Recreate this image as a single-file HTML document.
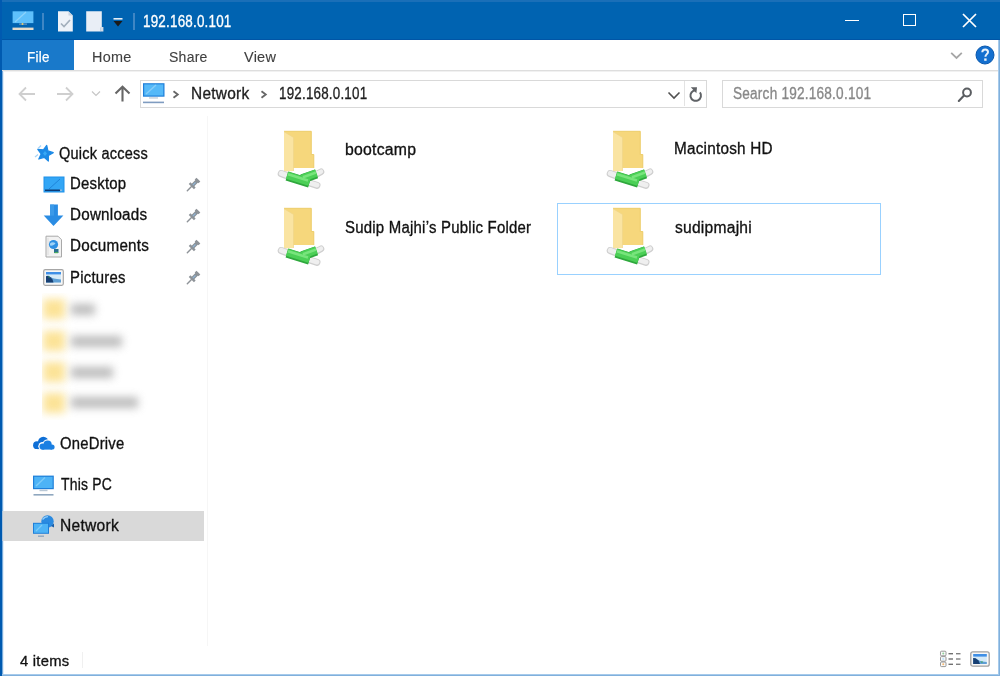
<!DOCTYPE html>
<html><head><meta charset="utf-8"><style>
html,body{margin:0;padding:0;width:1000px;height:676px;overflow:hidden;background:#fff;position:relative}
.t{position:absolute;font-family:"Liberation Sans", sans-serif;line-height:1;white-space:nowrap;-webkit-text-stroke:0.32px currentColor;transform-origin:0 0}
svg{overflow:visible}
</style></head><body><div id="w" style="position:absolute;left:0;top:0;width:1000px;height:676px;overflow:hidden;background:#fff">
<div style="position:absolute;left:0;top:0;width:1000px;height:40px;background:#0063B1"></div>
<div style="position:absolute;left:0;top:0;width:1000px;height:1.5px;background:#1a6fb8"></div>
<div style="position:absolute;left:0;top:38.5px;width:1000px;height:1.5px;background:#0055a6"></div>
<svg style="position:absolute;left:12px;top:10px" width="22" height="22" viewBox="0 0 22 22">
<rect x="0.6" y="1.3" width="20.8" height="11.8" fill="#5ec0fb"/><path d="M3 12L14 2" stroke="#8dd3fb" stroke-width="1.2"/>
<rect x="7" y="13.6" width="8" height="1" fill="#7aa3c8"/><circle cx="10.5" cy="14" r="1" fill="#e8d070"/>
<rect x="0.5" y="17.6" width="21" height="2.4" fill="#e6dccb"/></svg>
<div style="position:absolute;left:41.5px;top:12.5px;width:2px;height:17px;background:#4f8fc9;opacity:0.8"></div>
<svg style="position:absolute;left:57px;top:10px" width="18" height="23" viewBox="0 0 18 23">
<path d="M1 1.2H11.5L15.8 5.5V21.5H1Z" fill="#eef2f8"/><path d="M11.5 1.2V5.5H15.8" fill="#c6d2e0"/>
<path d="M4 13.5L7 16.5L13 10" stroke="#a3afbc" stroke-width="1.7" fill="none"/></svg>
<svg style="position:absolute;left:85px;top:10px" width="20" height="23" viewBox="0 0 20 23">
<path d="M1.2 1.2H16.8V17L15.5 18V21.5H1.2Z" fill="#e9eef6"/><rect x="15.2" y="17" width="3.2" height="4.5" fill="#d3dce8"/></svg>
<svg style="position:absolute;left:112px;top:17px" width="12" height="11" viewBox="0 0 12 11">
<rect x="1.5" y="1" width="9" height="1.6" fill="#e6eef6"/><path d="M1.5 4H10.5L6 9.5Z" fill="#1a1a1a"/></svg>
<div style="position:absolute;left:133px;top:12.5px;width:2px;height:17px;background:#4f8fc9;opacity:0.8"></div>
<div class="t" style="left:143.40px;top:13.56px;font-size:16px;color:#fff;letter-spacing:0.25px;transform:scaleX(0.8387);">192.168.0.101</div>
<div style="position:absolute;left:845px;top:19.8px;width:13.5px;height:1.7px;background:#fff"></div>
<div style="position:absolute;left:903.3px;top:13.8px;width:10.6px;height:10.6px;border:1.7px solid #fff"></div>
<svg style="position:absolute;left:962px;top:13px" width="15" height="15" viewBox="0 0 15 15">
<path d="M1 1L14 14M14 1L1 14" stroke="#fff" stroke-width="1.7"/></svg>
<div style="position:absolute;left:0;top:40px;width:1000px;height:30px;background:#fff"></div>
<div style="position:absolute;left:2px;top:40px;width:72px;height:30px;background:#1979CA"></div>
<div style="position:absolute;left:0;top:70px;width:1000px;height:1px;background:#dedede"></div>
<div style="position:absolute;left:0;top:71px;width:1000px;height:1px;background:#f1f1f1"></div>
<div class="t" style="left:27.00px;top:49.65px;font-size:14px;color:#fff;letter-spacing:0.25px;transform:scaleX(0.9583);-webkit-text-stroke:0.25px currentColor">File</div>
<div class="t" style="left:92.20px;top:49.65px;font-size:14px;color:#404040;letter-spacing:0.25px;transform:scaleX(1.0279);-webkit-text-stroke:0.12px currentColor">Home</div>
<div class="t" style="left:168.60px;top:49.65px;font-size:14px;color:#404040;letter-spacing:0.25px;transform:scaleX(1.0007);-webkit-text-stroke:0.12px currentColor">Share</div>
<div class="t" style="left:244.20px;top:49.65px;font-size:14px;color:#404040;letter-spacing:0.25px;transform:scaleX(1.0334);-webkit-text-stroke:0.12px currentColor">View</div>
<svg style="position:absolute;left:950px;top:51px" width="13" height="9" viewBox="0 0 13 9">
<path d="M1.2 1.8L6.5 7L11.8 1.8" stroke="#a6a6a6" stroke-width="1.8" fill="none"/></svg>
<svg style="position:absolute;left:975px;top:45px" width="20" height="20" viewBox="0 0 20 20">
<circle cx="10" cy="10" r="9" fill="#136fcf" stroke="#0b58ad" stroke-width="1"/>
<path d="M7.3 7.3C7.3 5.4 8.6 4.4 10.2 4.4C11.9 4.4 13 5.5 13 6.9C13 9 10.4 9.4 10.4 11.8" stroke="#e8f2fb" stroke-width="2" fill="none"/>
<rect x="9.2" y="13.4" width="2.4" height="2.4" fill="#e8f2fb"/></svg>
<svg style="position:absolute;left:18px;top:86px" width="18" height="16" viewBox="0 0 18 16">
<path d="M17 8H2.5M8 1.5L1.5 8L8 14.5" stroke="#cfcfcf" stroke-width="1.8" fill="none"/></svg>
<svg style="position:absolute;left:56px;top:86px" width="18" height="16" viewBox="0 0 18 16">
<path d="M1 8H15.5M10 1.5L16.5 8L10 14.5" stroke="#cfcfcf" stroke-width="1.8" fill="none"/></svg>
<svg style="position:absolute;left:91px;top:90px" width="10" height="7" viewBox="0 0 10 7">
<path d="M1 1.5L5 5.5L9 1.5" stroke="#c6c6c6" stroke-width="1.2" fill="none"/></svg>
<svg style="position:absolute;left:114px;top:85px" width="17" height="17" viewBox="0 0 17 17">
<path d="M8.5 16.5V2M1.5 8.5L8.5 1.8L15.5 8.5" stroke="#666" stroke-width="2.1" fill="none"/></svg>
<div style="position:absolute;left:140px;top:80px;width:564.5px;height:26px;border:1px solid #d9d9d9"></div>
<div style="position:absolute;left:684px;top:81px;width:1px;height:25px;background:#e3e3e3"></div>
<svg style="position:absolute;left:142px;top:82px" width="24" height="22" viewBox="0 0 24 22">
<rect x="1" y="1.2" width="21.5" height="13.5" fill="#1f7fd9"/><rect x="2.2" y="2.4" width="19.1" height="11.1" fill="#55b9f8"/>
<path d="M4 12L14 3" stroke="#85cdf9" stroke-width="1.5"/>
<rect x="7" y="15.2" width="9" height="1.5" fill="#c9d3dd"/><rect x="1" y="19.6" width="21" height="1.6" fill="#7f9cc0"/></svg>
<svg style="position:absolute;left:172px;top:90px" width="8" height="9" viewBox="0 0 8 9">
<path d="M1.5 1.2L5.8 4.5L1.5 7.8" stroke="#666" stroke-width="1.8" fill="none"/></svg>
<div class="t" style="left:191.00px;top:85.96px;font-size:16px;color:#1e1e1e;letter-spacing:0.25px;transform:scaleX(0.9661);">Network</div>
<svg style="position:absolute;left:260px;top:90px" width="8" height="9" viewBox="0 0 8 9">
<path d="M1.5 1.2L5.8 4.5L1.5 7.8" stroke="#666" stroke-width="1.8" fill="none"/></svg>
<div class="t" style="left:279.00px;top:85.96px;font-size:16px;color:#1e1e1e;letter-spacing:0.25px;transform:scaleX(0.8365);">192.168.0.101</div>
<svg style="position:absolute;left:667px;top:91px" width="14" height="9" viewBox="0 0 14 9">
<path d="M1.5 1.5L7 7L12.5 1.5" stroke="#505050" stroke-width="1.6" fill="none"/></svg>
<svg style="position:absolute;left:688px;top:86px" width="16" height="17" viewBox="0 0 16 17">
<path d="M11.93 6.31A5.3 5.3 0 1 1 7.6 4.22" stroke="#5f6266" stroke-width="2" fill="none"/>
<path d="M2.8 1.2L9 1.2L8.4 7.2Z" fill="#5f6266"/></svg>
<div style="position:absolute;left:722px;top:80px;width:259px;height:26px;border:1px solid #d9d9d9"></div>
<div class="t" style="left:733.00px;top:85.96px;font-size:16px;color:#888;letter-spacing:0.25px;transform:scaleX(0.8510);">Search 192.168.0.101</div>
<svg style="position:absolute;left:956px;top:87px" width="17" height="16" viewBox="0 0 17 16">
<circle cx="11" cy="5.5" r="3.9" stroke="#5a5d61" stroke-width="2" fill="none"/>
<path d="M8 8.6L2.8 13.9" stroke="#5a5d61" stroke-width="2.1" stroke-linecap="round" fill="none"/></svg>
<div style="position:absolute;left:207px;top:116px;width:1px;height:530px;background:#f6f6f6"></div>
<div style="position:absolute;left:2px;top:511px;width:202px;height:30px;background:#d9d9d9"></div>
<div class="t" style="left:59.00px;top:146.06px;font-size:16px;color:#111;letter-spacing:0.25px;transform:scaleX(0.9076);">Quick access</div>
<div class="t" style="left:70.20px;top:176.46px;font-size:16px;color:#111;letter-spacing:0.25px;transform:scaleX(0.9326);">Desktop</div>
<div class="t" style="left:70.20px;top:207.46px;font-size:16px;color:#111;letter-spacing:0.25px;transform:scaleX(0.9500);">Downloads</div>
<div class="t" style="left:70.20px;top:238.46px;font-size:16px;color:#111;letter-spacing:0.25px;transform:scaleX(0.9514);">Documents</div>
<div class="t" style="left:70.20px;top:269.56px;font-size:16px;color:#111;letter-spacing:0.25px;transform:scaleX(0.9310);">Pictures</div>
<div class="t" style="left:60.00px;top:436.06px;font-size:16px;color:#111;letter-spacing:0.25px;transform:scaleX(0.9265);">OneDrive</div>
<div class="t" style="left:61.00px;top:477.26px;font-size:16px;color:#111;letter-spacing:0.25px;transform:scaleX(0.8712);">This PC</div>
<div class="t" style="left:60.00px;top:518.26px;font-size:16px;color:#111;letter-spacing:0.25px;transform:scaleX(0.9750);">Network</div>
<svg style="position:absolute;left:34px;top:144px" width="22" height="19" viewBox="0 0 22 19">
<path d="M12.73 1.38L13.90 6.89L19.25 8.63L14.38 11.45L14.38 17.08L10.19 13.31L4.83 15.05L7.12 9.91L3.81 5.35L9.41 5.94Z" fill="#1d8ae6" stroke="#1d8ae6" stroke-width="1.2" stroke-linejoin="round"/>
<path d="M11 7L13 9.5L11 12L9 9.5Z" fill="#38a8f5"/>
<path d="M4 4.5L7 1.5M1 13L4 10.5" stroke="#a8d4f6" stroke-width="1.3"/></svg>
<svg style="position:absolute;left:43px;top:176px" width="22" height="17" viewBox="0 0 22 17">
<rect x="0.5" y="0.5" width="21" height="16" fill="#1e90e8"/><rect x="1.5" y="1.5" width="19" height="14" fill="#33a6f5"/>
<path d="M6 13L17 3" stroke="#1b7fd6" stroke-width="0.9"/><rect x="16" y="13.5" width="3" height="1.6" fill="#8fb8dc"/><rect x="2" y="13.5" width="15" height="1.6" fill="#0b3a75"/></svg>
<svg style="position:absolute;left:43px;top:204px" width="21" height="23" viewBox="0 0 21 23">
<path d="M7.1 0.6H14.9V11.6H20.4L10.5 22.1L0.7 11.6H7.1Z" fill="#2a8ce3"/><path d="M7.1 0.6H11V11.6H7.1Z" fill="#3c9ae8"/></svg>
<svg style="position:absolute;left:45px;top:235px" width="18" height="23" viewBox="0 0 18 23">
<path d="M1 1.2H13L16.5 4.7V22H1Z" fill="#f2f2f2" stroke="#a9a9a9" stroke-width="1"/>
<path d="M3 3V20" stroke="#dcdcdc" stroke-width="1"/>
<circle cx="8.5" cy="9.5" r="4.6" fill="#2f90e2"/><path d="M5 8.5C6.5 7 9 6.8 10.5 8.5C9.5 10 7 11 5 10.5" fill="#9fd3f7"/>
<rect x="9" y="14" width="4.5" height="4" fill="#2b6f8f"/><rect x="9.5" y="17" width="3.5" height="1.2" fill="#4cae5a"/></svg>
<svg style="position:absolute;left:43px;top:269px" width="21" height="17" viewBox="0 0 21 17">
<rect x="0.7" y="0.7" width="19.6" height="15.6" rx="1.5" fill="#f6f6f6" stroke="#a6a6a6" stroke-width="1.2"/>
<rect x="3" y="3" width="15" height="10.5" fill="#d6eaf8"/><rect x="3" y="3" width="15" height="2.4" fill="#3f8fe6"/>
<path d="M3 7.5L5.5 6.8L8 8.5L11 9.5L14 10L18 10.5V13.5H3Z" fill="#5f9fd4"/>
<path d="M3 7.2L5 6.7L7.5 8.3L9.5 10.5L10.5 13.5H3Z" fill="#173f73"/><path d="M5 7L7 8L6 9Z" fill="#3a9a4a"/></svg>
<svg style="position:absolute;left:186px;top:177px" width="15" height="15" viewBox="0 0 15 15">
<path d="M1.3 13.8L5.5 9.5" stroke="#8e9398" stroke-width="1.4" stroke-linecap="round"/>
<path d="M3.6 6.2L8.8 11.4" stroke="#8e9398" stroke-width="2.4"/>
<path d="M6.5 8.5L11.2 3.8" stroke="#8a9196" stroke-width="3.6"/>
<path d="M9.6 1.6L13.4 5.4" stroke="#8e9398" stroke-width="2.6"/>
<path d="M6.8 8.2L9.5 5.5" stroke="#8fb3d6" stroke-width="1.2"/></svg>
<svg style="position:absolute;left:186px;top:208px" width="15" height="15" viewBox="0 0 15 15">
<path d="M1.3 13.8L5.5 9.5" stroke="#8e9398" stroke-width="1.4" stroke-linecap="round"/>
<path d="M3.6 6.2L8.8 11.4" stroke="#8e9398" stroke-width="2.4"/>
<path d="M6.5 8.5L11.2 3.8" stroke="#8a9196" stroke-width="3.6"/>
<path d="M9.6 1.6L13.4 5.4" stroke="#8e9398" stroke-width="2.6"/>
<path d="M6.8 8.2L9.5 5.5" stroke="#8fb3d6" stroke-width="1.2"/></svg>
<svg style="position:absolute;left:186px;top:239px" width="15" height="15" viewBox="0 0 15 15">
<path d="M1.3 13.8L5.5 9.5" stroke="#8e9398" stroke-width="1.4" stroke-linecap="round"/>
<path d="M3.6 6.2L8.8 11.4" stroke="#8e9398" stroke-width="2.4"/>
<path d="M6.5 8.5L11.2 3.8" stroke="#8a9196" stroke-width="3.6"/>
<path d="M9.6 1.6L13.4 5.4" stroke="#8e9398" stroke-width="2.6"/>
<path d="M6.8 8.2L9.5 5.5" stroke="#8fb3d6" stroke-width="1.2"/></svg>
<svg style="position:absolute;left:186px;top:270px" width="15" height="15" viewBox="0 0 15 15">
<path d="M1.3 13.8L5.5 9.5" stroke="#8e9398" stroke-width="1.4" stroke-linecap="round"/>
<path d="M3.6 6.2L8.8 11.4" stroke="#8e9398" stroke-width="2.4"/>
<path d="M6.5 8.5L11.2 3.8" stroke="#8a9196" stroke-width="3.6"/>
<path d="M9.6 1.6L13.4 5.4" stroke="#8e9398" stroke-width="2.6"/>
<path d="M6.8 8.2L9.5 5.5" stroke="#8fb3d6" stroke-width="1.2"/></svg>
<div style="position:absolute;left:42px;top:293px;width:110px;height:127px;overflow:hidden">
<div style="position:absolute;left:1px;top:6px;width:22px;height:20px;background:#fbd86c;filter:blur(4px);opacity:0.7"></div>
<div style="position:absolute;left:29px;top:10.5px;width:24px;height:11px;background:#a6a6a6;filter:blur(4px);opacity:0.75"></div>
<div style="position:absolute;left:1px;top:38px;width:22px;height:20px;background:#fbd86c;filter:blur(4px);opacity:0.7"></div>
<div style="position:absolute;left:29px;top:42.5px;width:51px;height:11px;background:#a6a6a6;filter:blur(4px);opacity:0.75"></div>
<div style="position:absolute;left:1px;top:69px;width:22px;height:20px;background:#fbd86c;filter:blur(4px);opacity:0.7"></div>
<div style="position:absolute;left:29px;top:73.5px;width:42px;height:11px;background:#a6a6a6;filter:blur(4px);opacity:0.75"></div>
<div style="position:absolute;left:1px;top:99.5px;width:22px;height:20px;background:#fbd86c;filter:blur(4px);opacity:0.7"></div>
<div style="position:absolute;left:29px;top:104.0px;width:67px;height:11px;background:#a6a6a6;filter:blur(4px);opacity:0.75"></div>
</div>
<svg style="position:absolute;left:32px;top:435px" width="24" height="16" viewBox="0 0 24 16">
<g fill="#0f6fd6"><circle cx="5" cy="10.2" r="3.9"/><circle cx="11.3" cy="7" r="5.3"/><rect x="5" y="7" width="10" height="7.1"/></g>
<g fill="#fff"><circle cx="10.6" cy="11.2" r="4.3"/><circle cx="15.6" cy="9.4" r="5.2"/><circle cx="19.6" cy="11.6" r="3.8"/><rect x="10.6" y="10" width="9" height="5.6"/></g>
<g fill="#1a7fe2"><circle cx="10.6" cy="11.6" r="3.1"/><circle cx="15.6" cy="9.6" r="4.1"/><circle cx="20" cy="12" r="2.6"/><rect x="10.6" y="10" width="9.4" height="4.6"/></g>
</svg>
<svg style="position:absolute;left:32px;top:475px" width="23" height="22" viewBox="0 0 23 22">
<rect x="1" y="0.6" width="20.8" height="13.6" fill="#1f7fd9"/><rect x="2.2" y="1.8" width="18.4" height="11.2" fill="#4db3f6"/>
<path d="M4 11L13 2.5" stroke="#7ccaf8" stroke-width="1.5"/>
<rect x="7.5" y="14.6" width="8" height="1.6" fill="#b9c8d6"/><rect x="1.5" y="19" width="20" height="1.6" fill="#8fa7bf"/></svg>
<svg style="position:absolute;left:32px;top:514px" width="24" height="24" viewBox="0 0 24 24">
<circle cx="15.5" cy="7.5" r="6.2" fill="#2a8ae0"/><path d="M10.5 5.5C12 3.5 14 2.6 16 2.6" stroke="#8fcaf6" stroke-width="1.4" fill="none"/>
<path d="M19 12L22 9.5V13.5Z" fill="#1b5fa8"/>
<rect x="1" y="8.8" width="16" height="11" fill="#1f7fd9"/><rect x="2" y="9.8" width="14" height="9" fill="#4db3f6"/>
<path d="M4 17L10 11" stroke="#7ccaf8" stroke-width="1.2"/>
<rect x="6" y="21.5" width="6" height="1.4" fill="#8fa7bf"/></svg>
<div style="position:absolute;left:557px;top:203px;width:322px;height:70px;border:1.3px solid #99d1ff"></div>
<svg style="position:absolute;left:276px;top:131px" width="52" height="62" viewBox="-1 0 52 62">
<path d="M7 0.3H34.3V23.5H36.8V37H7Z" fill="#f6d77c"/>
<path d="M7 0.3H34.3V23.5H36.8V37" fill="none" stroke="#eccb63" stroke-width="0.9"/>
<path d="M7 0.7L16.5 6.4V40L7 40.5Z" fill="#fae4a2"/>
<path d="M7 0.7L16.5 6.4V40" fill="none" stroke="#efd58a" stroke-width="0.7"/>
<path d="M4.3 42.6L11 45" stroke="#cfcfcf" stroke-width="7.2" stroke-linecap="round"/>
<path d="M4.3 42.4L11 44.8" stroke="#efefef" stroke-width="5" stroke-linecap="round"/>
<path d="M39 43.5L44 40.8" stroke="#cfcfcf" stroke-width="6.6" stroke-linecap="round"/>
<path d="M39 43.3L44 40.6" stroke="#efefef" stroke-width="4.4" stroke-linecap="round"/>
<path d="M31 51.5L40 54.3" stroke="#cfcfcf" stroke-width="7" stroke-linecap="round"/>
<path d="M31 51.3L40 54.1" stroke="#efefef" stroke-width="4.8" stroke-linecap="round"/>
<path d="M25 48L39.5 42.8M10 45L32.5 52" stroke="#2fa83d" stroke-width="9.4"/>
<path d="M25 47.3L39.5 42.1M10 44.3L32.5 51.3" stroke="#4bcf56" stroke-width="7.4"/>
<path d="M26 46.2L39 41.6M11 43.3L31 49.5" stroke="#78e47c" stroke-width="2.6"/>
</svg>
<div class="t" style="left:345.00px;top:141.66px;font-size:16px;color:#111;letter-spacing:0.25px;transform:scaleX(0.9859);">bootcamp</div>
<svg style="position:absolute;left:605px;top:131px" width="52" height="62" viewBox="-1 0 52 62">
<path d="M7 0.3H34.3V23.5H36.8V37H7Z" fill="#f6d77c"/>
<path d="M7 0.3H34.3V23.5H36.8V37" fill="none" stroke="#eccb63" stroke-width="0.9"/>
<path d="M7 0.7L16.5 6.4V40L7 40.5Z" fill="#fae4a2"/>
<path d="M7 0.7L16.5 6.4V40" fill="none" stroke="#efd58a" stroke-width="0.7"/>
<path d="M4.3 42.6L11 45" stroke="#cfcfcf" stroke-width="7.2" stroke-linecap="round"/>
<path d="M4.3 42.4L11 44.8" stroke="#efefef" stroke-width="5" stroke-linecap="round"/>
<path d="M39 43.5L44 40.8" stroke="#cfcfcf" stroke-width="6.6" stroke-linecap="round"/>
<path d="M39 43.3L44 40.6" stroke="#efefef" stroke-width="4.4" stroke-linecap="round"/>
<path d="M31 51.5L40 54.3" stroke="#cfcfcf" stroke-width="7" stroke-linecap="round"/>
<path d="M31 51.3L40 54.1" stroke="#efefef" stroke-width="4.8" stroke-linecap="round"/>
<path d="M25 48L39.5 42.8M10 45L32.5 52" stroke="#2fa83d" stroke-width="9.4"/>
<path d="M25 47.3L39.5 42.1M10 44.3L32.5 51.3" stroke="#4bcf56" stroke-width="7.4"/>
<path d="M26 46.2L39 41.6M11 43.3L31 49.5" stroke="#78e47c" stroke-width="2.6"/>
</svg>
<div class="t" style="left:674.40px;top:141.26px;font-size:16px;color:#111;letter-spacing:0.25px;transform:scaleX(0.9556);">Macintosh HD</div>
<svg style="position:absolute;left:276px;top:208px" width="52" height="62" viewBox="-1 0 52 62">
<path d="M7 0.3H34.3V23.5H36.8V37H7Z" fill="#f6d77c"/>
<path d="M7 0.3H34.3V23.5H36.8V37" fill="none" stroke="#eccb63" stroke-width="0.9"/>
<path d="M7 0.7L16.5 6.4V40L7 40.5Z" fill="#fae4a2"/>
<path d="M7 0.7L16.5 6.4V40" fill="none" stroke="#efd58a" stroke-width="0.7"/>
<path d="M4.3 42.6L11 45" stroke="#cfcfcf" stroke-width="7.2" stroke-linecap="round"/>
<path d="M4.3 42.4L11 44.8" stroke="#efefef" stroke-width="5" stroke-linecap="round"/>
<path d="M39 43.5L44 40.8" stroke="#cfcfcf" stroke-width="6.6" stroke-linecap="round"/>
<path d="M39 43.3L44 40.6" stroke="#efefef" stroke-width="4.4" stroke-linecap="round"/>
<path d="M31 51.5L40 54.3" stroke="#cfcfcf" stroke-width="7" stroke-linecap="round"/>
<path d="M31 51.3L40 54.1" stroke="#efefef" stroke-width="4.8" stroke-linecap="round"/>
<path d="M25 48L39.5 42.8M10 45L32.5 52" stroke="#2fa83d" stroke-width="9.4"/>
<path d="M25 47.3L39.5 42.1M10 44.3L32.5 51.3" stroke="#4bcf56" stroke-width="7.4"/>
<path d="M26 46.2L39 41.6M11 43.3L31 49.5" stroke="#78e47c" stroke-width="2.6"/>
</svg>
<div class="t" style="left:345.00px;top:220.06px;font-size:16px;color:#111;letter-spacing:0.25px;transform:scaleX(0.9343);">Sudip Majhi’s Public Folder</div>
<svg style="position:absolute;left:605px;top:208px" width="52" height="62" viewBox="-1 0 52 62">
<path d="M7 0.3H34.3V23.5H36.8V37H7Z" fill="#f6d77c"/>
<path d="M7 0.3H34.3V23.5H36.8V37" fill="none" stroke="#eccb63" stroke-width="0.9"/>
<path d="M7 0.7L16.5 6.4V40L7 40.5Z" fill="#fae4a2"/>
<path d="M7 0.7L16.5 6.4V40" fill="none" stroke="#efd58a" stroke-width="0.7"/>
<path d="M4.3 42.6L11 45" stroke="#cfcfcf" stroke-width="7.2" stroke-linecap="round"/>
<path d="M4.3 42.4L11 44.8" stroke="#efefef" stroke-width="5" stroke-linecap="round"/>
<path d="M39 43.5L44 40.8" stroke="#cfcfcf" stroke-width="6.6" stroke-linecap="round"/>
<path d="M39 43.3L44 40.6" stroke="#efefef" stroke-width="4.4" stroke-linecap="round"/>
<path d="M31 51.5L40 54.3" stroke="#cfcfcf" stroke-width="7" stroke-linecap="round"/>
<path d="M31 51.3L40 54.1" stroke="#efefef" stroke-width="4.8" stroke-linecap="round"/>
<path d="M25 48L39.5 42.8M10 45L32.5 52" stroke="#2fa83d" stroke-width="9.4"/>
<path d="M25 47.3L39.5 42.1M10 44.3L32.5 51.3" stroke="#4bcf56" stroke-width="7.4"/>
<path d="M26 46.2L39 41.6M11 43.3L31 49.5" stroke="#78e47c" stroke-width="2.6"/>
</svg>
<div class="t" style="left:674.60px;top:220.06px;font-size:16px;color:#111;letter-spacing:0.25px;transform:scaleX(0.9743);">sudipmajhi</div>
<div class="t" style="left:20.00px;top:653.30px;font-size:15px;color:#111;letter-spacing:0.25px;transform:scaleX(0.9848);">4 items</div>
<div style="position:absolute;left:82px;top:652px;width:1px;height:16px;background:#f0f0f0"></div>
<svg style="position:absolute;left:939px;top:650px" width="24" height="19" viewBox="0 0 24 19">
<rect x="1.5" y="1.2" width="5.5" height="4.6" rx="1" fill="#fafafa" stroke="#8c8c8c" stroke-width="0.9"/>
<rect x="1.5" y="6.6" width="5.5" height="4.6" rx="1" fill="#fafafa" stroke="#8c8c8c" stroke-width="0.9"/>
<rect x="1.5" y="12" width="5.5" height="4.6" rx="1" fill="#fafafa" stroke="#8c8c8c" stroke-width="0.9"/>
<circle cx="4.25" cy="3.5" r="1" fill="#8fd19a"/><circle cx="4.25" cy="8.9" r="1.1" fill="#bfe3fb"/><circle cx="4.25" cy="14.3" r="1" fill="#f6b870"/>
<rect x="9.5" y="3" width="4.5" height="1.4" fill="#707070"/><rect x="17" y="3" width="4.5" height="1.4" fill="#808080"/>
<rect x="9.5" y="8.3" width="4.5" height="1.4" fill="#707070"/><rect x="17" y="8.3" width="4.5" height="1.4" fill="#808080"/>
<rect x="9.5" y="13.6" width="4.5" height="1.4" fill="#707070"/><rect x="17" y="13.6" width="4.5" height="1.4" fill="#808080"/></svg>
<svg style="position:absolute;left:970px;top:651px" width="20" height="16" viewBox="0 0 20 16">
<rect x="0.8" y="0.8" width="18.4" height="14.4" rx="2" fill="#f7f7f7" stroke="#a0a0a0" stroke-width="1.3"/>
<rect x="3.2" y="3" width="13.6" height="10" fill="#d4e9f7"/><rect x="3.2" y="3" width="13.6" height="2.6" fill="#3f8fe6"/>
<path d="M3.2 7L6 7.5L9 9.5L12 10.5L16.8 11V13H3.2Z" fill="#5f9fd4"/><path d="M3.2 7L5.5 7.3L8.5 9.5L10 13H3.2Z" fill="#173f73"/>
<path d="M10.5 10.5L13 10.5L12 12Z" fill="#3aa34a"/></svg>
<div style="position:absolute;left:0;top:0;width:2px;height:676px;background:#005ab0"></div>
<div style="position:absolute;left:2px;top:71px;width:1px;height:440px;background:#78abdb"></div>
<div style="position:absolute;left:3px;top:71px;width:1px;height:440px;background:#e3eef8"></div>
<div style="position:absolute;left:2px;top:541px;width:1px;height:135px;background:#78abdb"></div>
<div style="position:absolute;left:3px;top:541px;width:1px;height:135px;background:#e3eef8"></div>
<div style="position:absolute;left:2px;top:511px;width:1px;height:30px;background:#a9c3dc"></div>
<div style="position:absolute;left:998px;top:40px;width:1px;height:636px;background:#a6caeb"></div>
<div style="position:absolute;left:999px;top:40px;width:1px;height:636px;background:#80b0dc"></div>
<div style="position:absolute;left:2px;top:674px;width:997px;height:1px;background:#a6caeb"></div>
<div style="position:absolute;left:2px;top:675px;width:998px;height:1px;background:#80b0dc"></div>
</div></body></html>
